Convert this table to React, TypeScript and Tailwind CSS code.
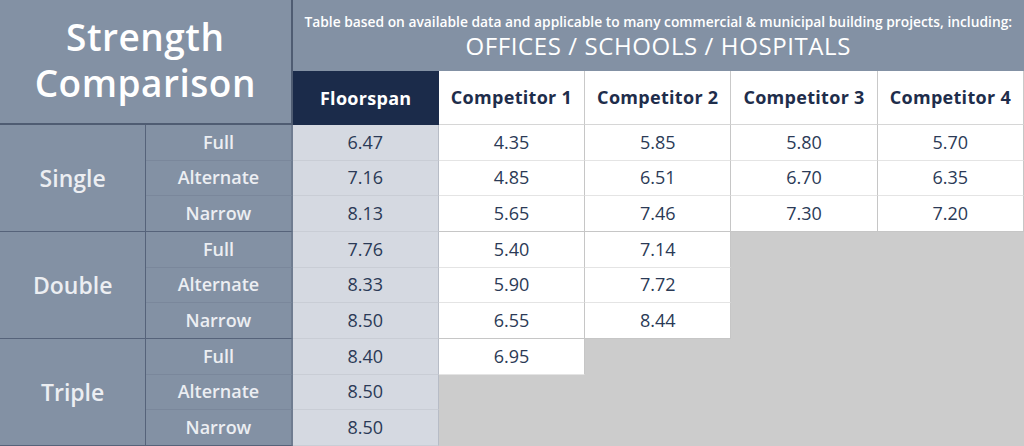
const font = { fontFamily: '"Open Sans", "DejaVu Sans", sans-serif' };

const competitors = ['Competitor 1', 'Competitor 2', 'Competitor 3', 'Competitor 4'];

const groups: { name: string; rows: { label: string; floorspan: string; comp: string[] }[] }[] = [
  {
    name: 'Single',
    rows: [
      { label: 'Full', floorspan: '6.47', comp: ['4.35', '5.85', '5.80', '5.70'] },
      { label: 'Alternate', floorspan: '7.16', comp: ['4.85', '6.51', '6.70', '6.35'] },
      { label: 'Narrow', floorspan: '8.13', comp: ['5.65', '7.46', '7.30', '7.20'] },
    ],
  },
  {
    name: 'Double',
    rows: [
      { label: 'Full', floorspan: '7.76', comp: ['5.40', '7.14'] },
      { label: 'Alternate', floorspan: '8.33', comp: ['5.90', '7.72'] },
      { label: 'Narrow', floorspan: '8.50', comp: ['6.55', '8.44'] },
    ],
  },
  {
    name: 'Triple',
    rows: [
      { label: 'Full', floorspan: '8.40', comp: ['6.95'] },
      { label: 'Alternate', floorspan: '8.50', comp: [] },
      { label: 'Narrow', floorspan: '8.50', comp: [] },
    ],
  },
];

const colStart = ['col-start-4', 'col-start-5', 'col-start-6', 'col-start-7'];
const rowStart = [
  'row-start-3', 'row-start-4', 'row-start-5', 'row-start-6', 'row-start-7',
  'row-start-8', 'row-start-9', 'row-start-10', 'row-start-11',
];
const groupRow = ['row-start-3', 'row-start-6', 'row-start-9'];

export default function App() {
  return (
    <div
      style={font}
      className="w-[1024px] h-[446px] bg-[#cccccc] grid grid-cols-7 grid-rows-[71px_54px_repeat(9,1fr)] overflow-hidden"
    >
      {/* Title */}
      <div className="col-span-2 row-span-2 col-start-1 row-start-1 bg-[#8391a4] border-r-2 border-b-2 border-[#4f5c72] flex flex-col items-center justify-center text-white text-[37px] font-semibold leading-[46px] tracking-[0.5px] pb-1">
        <span>Strength</span>
        <span>Comparison</span>
      </div>

      {/* Top banner */}
      <div className="col-span-5 col-start-3 row-start-1 bg-[#8391a4] flex flex-col items-center justify-center text-white pt-1">
        <p className="text-[13.8px] font-semibold leading-4 whitespace-nowrap">
          Table based on available data and applicable to many commercial &amp; municipal building projects, including:
        </p>
        <p className="text-[24px] font-medium leading-8 tracking-[0.6px] whitespace-nowrap">OFFICES / SCHOOLS / HOSPITALS</p>
      </div>

      {/* Column headers */}
      <div className="col-start-3 row-start-2 bg-[#1b2b4a] flex items-center justify-center text-white text-[18px] font-bold tracking-[0.3px]">
        Floorspan
      </div>
      {competitors.map((c, i) => (
        <div
          key={c}
          className={`${colStart[i]} row-start-2 bg-white border-r border-[#c9c9c9] border-b border-b-[#d6d6d6] flex items-center justify-center text-[#1e2d4b] text-[18px] font-bold tracking-[0.3px]`}
        >
          {c}
        </div>
      ))}

      {groups.map((g, gi) => (
        <div key={g.name} className="contents">
          <div
            className={`col-start-1 ${groupRow[gi]} row-span-3 bg-[#8391a4] border-r border-b border-[#56637a] flex items-center justify-center text-[#eceef2] text-[23px] font-semibold`}
          >
            {g.name}
          </div>
          {g.rows.map((r, ri) => {
            const row = rowStart[gi * 3 + ri];
            const last = ri === 2;
            return (
              <div key={r.label} className="contents">
                <div
                  className={`col-start-2 ${row} bg-[#8391a4] border-r-2 border-r-[#6f7c90] flex items-center justify-center text-[#eceef2] text-[18px] font-semibold ${last ? 'border-b border-b-[#56637a]' : 'border-b border-b-[#7a879b]'}`}
                >
                  {r.label}
                </div>
                <div
                  className={`col-start-3 ${row} bg-[#d5d9e1] border-r border-r-[#b7bcc6] border-b border-b-[#c9cdd5] flex items-center justify-center text-[#2b3a56] text-[18px]`}
                >
                  {r.floorspan}
                </div>
                {r.comp.map((v, ci) => (
                  <div
                    key={ci}
                    className={`${colStart[ci]} ${row} bg-white border-r border-r-[#c6c6c6] border-b ${last ? 'border-b-[#c6c6c6]' : 'border-b-[#e4e4e4]'} flex items-center justify-center text-[#2b3a56] text-[18px]`}
                  >
                    {v}
                  </div>
                ))}
              </div>
            );
          })}
        </div>
      ))}
    </div>
  );
}
